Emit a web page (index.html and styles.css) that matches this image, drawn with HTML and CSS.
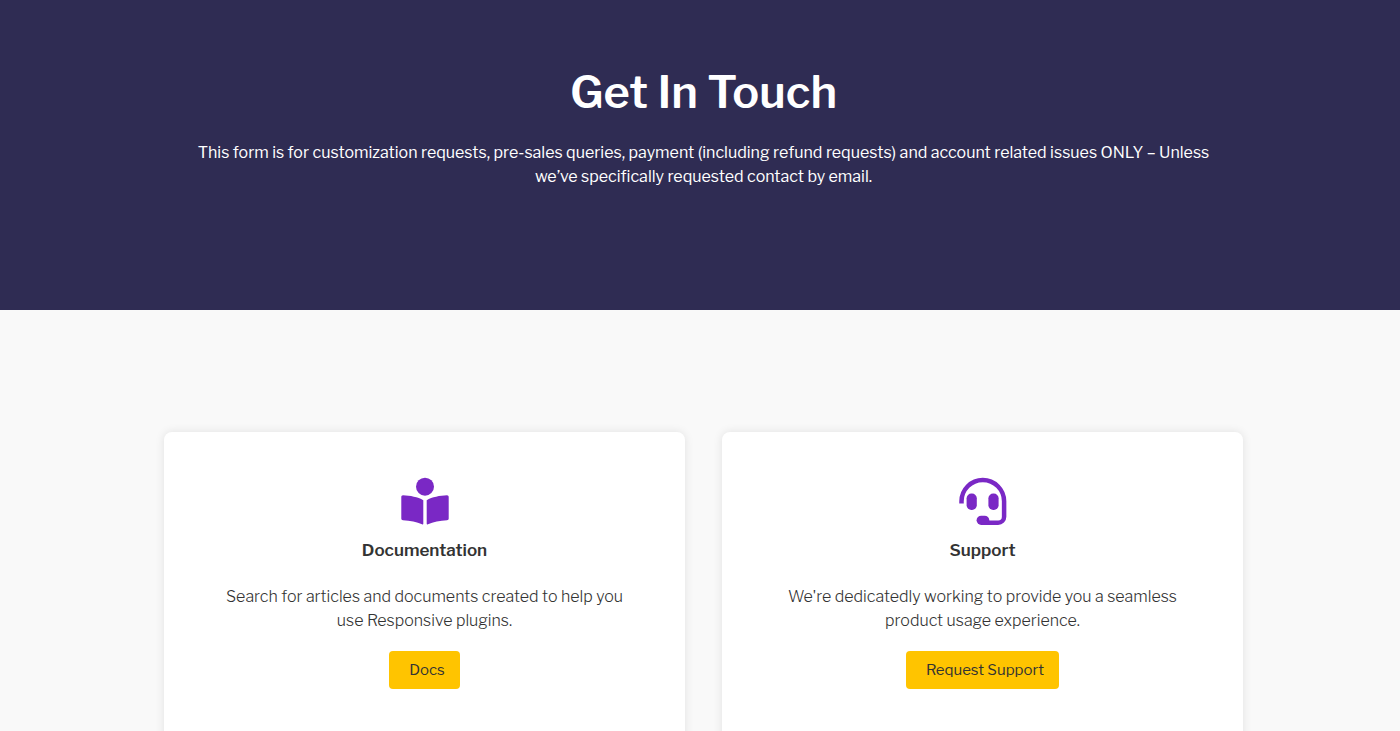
FILE: index.html
```html
<!DOCTYPE html>
<html lang="en">
<head>
    <meta charset="UTF-8">
    <meta name="viewport" content="width=device-width, initial-scale=1.0">
    <title>Get In Touch</title>
    <link rel="stylesheet" href="styles.css">
</head>
<body>
    <header class="hero">
        <h1>Get In Touch</h1>
        <p>This form is for customization requests, pre-sales queries, payment (including refund requests) and account related issues ONLY – Unless we’ve specifically requested contact by email.</p>
    </header>

    <main class="cards">
        <section class="card">
            <svg class="icon" viewBox="0 0 48 48" aria-hidden="true">
                <circle cx="24" cy="9.700" r="9"/>
                <path d="M22.300 23.300C17 20 9 18.600 2 18.300C1 18.300 .3 19 .3 20V41.500C.3 42.500 1 43.200 2 43.200C9 43.500 16 44.700 21 47.300C21.700 47.700 22.300 47.400 22.300 46.700Z"/>
                <path d="M25.700 23.300C31 20 39 18.600 46 18.300C47 18.300 47.700 19 47.700 20V41.500C47.700 42.500 47 43.200 46 43.200C39 43.500 32 44.700 27 47.300C26.300 47.700 25.700 47.400 25.700 46.700Z"/>
            </svg>
            <h2>Documentation</h2>
            <p>Search for articles and documents created to help you use Responsive plugins.</p>
            <a href="#docs" class="btn">Docs</a>
        </section>

        <section class="card">
            <svg class="icon" viewBox="0 0 48 48" aria-hidden="true">
                <path class="band" d="M2.500 26.500V24.300A21.300 21.300 0 0 1 45.100 24.300V39.700A6 6 0 0 1 39.100 45.700H25"/>
                <rect x="7.600" y="16.500" width="10.200" height="16.500" rx="4.800"/>
                <rect x="29.400" y="16.500" width="10.200" height="16.500" rx="4.800"/>
                <rect x="17.600" y="38.700" width="12.700" height="9.200" rx="4.600"/>
            </svg>
            <h2>Support</h2>
            <p>We're dedicatedly working to provide you a seamless product usage experience.</p>
            <a href="#support" class="btn">Request Support</a>
        </section>
    </main>
</body>
</html>
```
FILE: styles.css
```css
* { box-sizing: border-box; }

body {
    margin: 0;
    font-family: 'Libre Franklin', Inter, sans-serif;
    font-size: 16px;
    line-height: 24px;
    color: #333;
    background: #f9f9f9;
    text-align: center;
    overflow-x: hidden;
}

.hero {
    min-height: 310px;
    padding: 64px 183px 120px 190px;
    background: #2f2c53;
    color: #fff;
}
.hero h1 {
    margin: 0 0 21px;
    font-size: 45px;
    line-height: 56px;
    font-weight: 600;
}
.hero p { margin: 0; }

.cards {
    display: grid;
    grid-template-columns: 1fr 1fr;
    gap: 37px;
    padding: 122px 157px 100px 164px;
}
.card {
    padding: 45px 56px 60px;
    background: #fff;
    border-radius: 8px;
    box-shadow: 0 0 10px rgba(0, 0, 0, 0.1);
}
.icon {
    display: block;
    width: 48px;
    height: 48px;
    margin: 0 auto;
    fill: #7a28c5;
}
.band {
    fill: none;
    stroke: #7a28c5;
    stroke-width: 4.5;
}
.card h2 {
    margin: 13px 0 23px;
    font-size: 17px;
    line-height: 24px;
    font-weight: 600;
}
.card p {
    margin: 0 0 18px;
    font-weight: 300;
}

.btn {
    display: inline-block;
    padding: 7px 15px 7px 20px;
    font-size: 15px;
    color: #333;
    background: #ffc400;
    border-radius: 4px;
    text-decoration: none;
}
```
